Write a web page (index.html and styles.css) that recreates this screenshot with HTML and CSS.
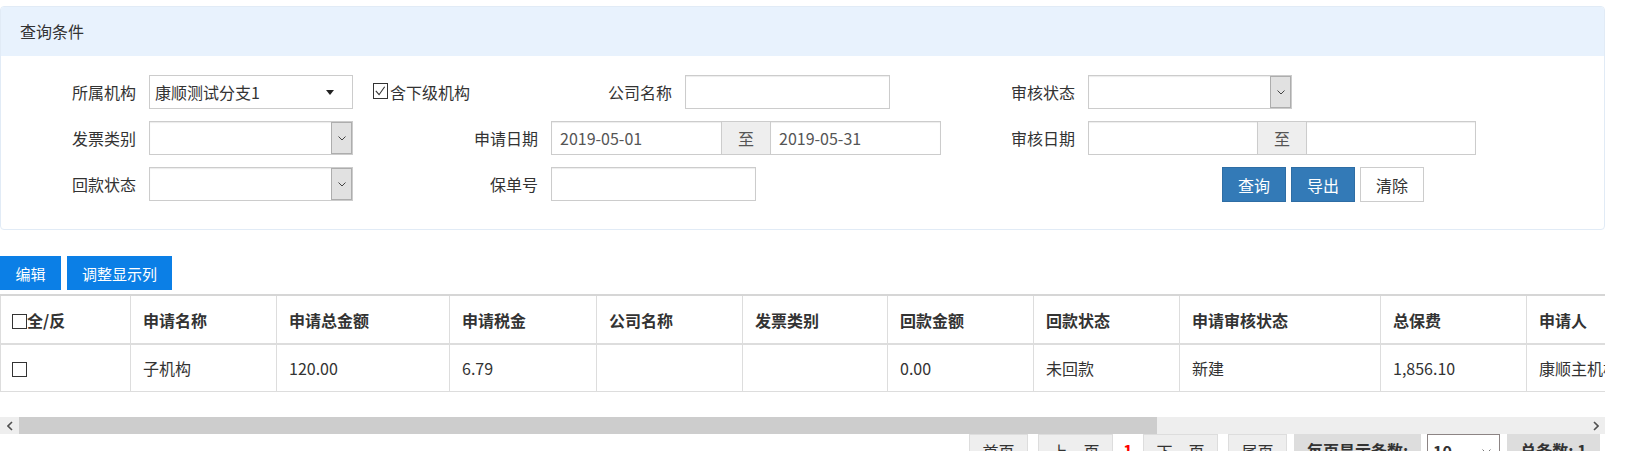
FILE: index.html
```html
<!DOCTYPE html>
<html lang="zh-CN">
<head>
    <meta charset="UTF-8">
    <title>发票申请查询</title>
    <link rel="stylesheet" href="styles.css">
</head>
<body>

<!-- 查询条件 -->
<div class="panel">
    <div class="panel-head">查询条件</div>
    <div class="panel-body">
        <div class="query-grid">
            <!-- 第一行 -->
            <label class="lbl">所属机构</label>
            <div class="org-select">
                <span>康顺测试分支1</span>
                <i class="caret"></i>
            </div>
            <div class="chk-cell">
                <span class="chk">
                    <svg width="15" height="15" viewBox="0 0 15 15"><polyline points="3,8 6.5,12 12.5,3.5" fill="none" stroke="#333" stroke-width="1.2"/></svg>
                </span>含下级机构
            </div>
            <label class="lbl">公司名称</label>
            <div class="cell"><input class="txt w205" type="text"></div>
            <label class="lbl">审核状态</label>
            <div class="cell">
                <div class="combo w204">
                    <span class="combo-val"></span>
                    <span class="combo-btn"><svg width="8" height="5" viewBox="0 0 8 5"><polyline points="0.5,0.5 4,4 7.5,0.5" fill="none" stroke="#444" stroke-width="1"/></svg></span>
                </div>
            </div>

            <!-- 第二行 -->
            <label class="lbl">发票类别</label>
            <div class="combo">
                <span class="combo-val"></span>
                <span class="combo-btn"><svg width="8" height="5" viewBox="0 0 8 5"><polyline points="0.5,0.5 4,4 7.5,0.5" fill="none" stroke="#444" stroke-width="1"/></svg></span>
            </div>
            <label class="lbl">申请日期</label>
            <div class="date-range span2">
                <input class="txt" type="text" value="2019-05-01">
                <span class="addon">至</span>
                <input class="txt" type="text" value="2019-05-31">
            </div>
            <label class="lbl">审核日期</label>
            <div class="date-range">
                <input class="txt" type="text">
                <span class="addon">至</span>
                <input class="txt" type="text">
            </div>

            <!-- 第三行 -->
            <label class="lbl">回款状态</label>
            <div class="combo">
                <span class="combo-val"></span>
                <span class="combo-btn"><svg width="8" height="5" viewBox="0 0 8 5"><polyline points="0.5,0.5 4,4 7.5,0.5" fill="none" stroke="#444" stroke-width="1"/></svg></span>
            </div>
            <label class="lbl">保单号</label>
            <div class="cell span2"><input class="txt w205" type="text"></div>
            <div class="cell"></div>
            <div class="btn-cell">
                <button class="btn btn-primary">查询</button>
                <button class="btn btn-primary">导出</button>
                <button class="btn btn-default">清除</button>
            </div>
        </div>
    </div>
</div>

<!-- 工具栏 -->
<div class="toolbar">
    <button class="tool-btn w61">编辑</button>
    <button class="tool-btn">调整显示列</button>
</div>

<!-- 列表 -->
<div class="grid-wrap">
    <table class="data-table">
        <colgroup>
            <col style="width:130px">
            <col style="width:146px">
            <col style="width:173px">
            <col style="width:147px">
            <col style="width:146px">
            <col style="width:145px">
            <col style="width:146px">
            <col style="width:146px">
            <col style="width:201px">
            <col style="width:146px">
            <col style="width:146px">
            <col style="width:146px">
            <col style="width:146px">
            <col style="width:146px">
        </colgroup>
        <thead>
        <tr>
            <th><span class="box"></span>全/反</th>
            <th>申请名称</th>
            <th>申请总金额</th>
            <th>申请税金</th>
            <th>公司名称</th>
            <th>发票类别</th>
            <th>回款金额</th>
            <th>回款状态</th>
            <th>申请审核状态</th>
            <th>总保费</th>
            <th>申请人</th>
            <th></th>
            <th></th>
            <th></th>
        </tr>
        </thead>
        <tbody>
        <tr>
            <td><span class="box"></span></td>
            <td>子机构</td>
            <td>120.00</td>
            <td>6.79</td>
            <td></td>
            <td></td>
            <td>0.00</td>
            <td>未回款</td>
            <td>新建</td>
            <td>1,856.10</td>
            <td>康顺主机构</td>
            <td></td>
            <td></td>
            <td></td>
        </tr>
        </tbody>
    </table>
</div>

<!-- 横向滚动条 -->
<div class="hscroll">
    <span class="hs-arrow"><svg width="6" height="10" viewBox="0 0 6 10"><polyline points="5,1 1,5 5,9" fill="none" stroke="#505050" stroke-width="1.6"/></svg></span>
    <div class="hs-track"><div class="hs-thumb"></div></div>
    <span class="hs-arrow"><svg width="6" height="10" viewBox="0 0 6 10"><polyline points="1,1 5,5 1,9" fill="none" stroke="#505050" stroke-width="1.6"/></svg></span>
</div>

<!-- 分页 -->
<div class="pager">
    <span class="pg-btn w59">首页</span>
    <span class="pg-btn w75 ml10">上一页</span>
    <span class="pg-cur">1</span>
    <span class="pg-btn w75">下一页</span>
    <span class="pg-btn w59 ml10">尾页</span>
    <span class="pg-info w127 ml7">每页显示条数:</span>
    <span class="pg-size">10
        <svg width="9" height="5" viewBox="0 0 9 5"><polyline points="0.5,0.5 4.5,4.5 8.5,0.5" fill="none" stroke="#777" stroke-width="1"/></svg>
    </span>
    <span class="pg-info w93 ml7">总条数: 1</span>
</div>

</body>
</html>
```

FILE: styles.css
```css
/* 页面基础 */
html, body {
    overflow: hidden;
}
body {
    margin: 6px 20px 0 0;
    font-family: "Microsoft YaHei", "Noto Sans CJK SC", sans-serif;
    font-size: 16px;
    color: #333;
    background: #fff;
}
input, button {
    font-family: inherit;
    font-size: 16px;
}

/* 查询面板 */
.panel {
    border: 1px solid #e1ebf6;
    border-radius: 4px;
}
.panel-head {
    height: 49px;
    line-height: 49px;
    padding-left: 19px;
    background: #e8f2fd;
    border-radius: 3px 3px 0 0;
}
.panel-body {
    padding: 19px 0 28px;
}
.query-grid {
    display: grid;
    grid-template-columns: 148px 204px 198px 134px 256px 147px 388px;
    grid-auto-rows: 34px;
    row-gap: 12px;
}
.lbl {
    display: flex;
    align-items: center;
    justify-content: flex-end;
    padding-right: 13px;
    line-height: 20px;
}
.cell {
    display: flex;
    align-items: center;
}
.span2 {
    grid-column: span 2;
}

/* 所属机构下拉 */
.org-select {
    box-sizing: border-box;
    display: flex;
    align-items: center;
    justify-content: space-between;
    border: 1px solid #ccc;
    padding: 0 18px 0 5px;
    line-height: 20px;
}
.caret {
    width: 0;
    height: 0;
    border-left: 4px solid transparent;
    border-right: 4px solid transparent;
    border-top: 5px solid #222;
}

/* 复选框 */
.chk-cell {
    display: flex;
    align-items: center;
    padding-left: 20px;
    line-height: 20px;
}
.chk {
    box-sizing: border-box;
    width: 15px;
    height: 16px;
    border: 1px solid #333;
    margin-right: 2px;
    margin-top: -2px;
    display: flex;
}
.chk svg {
    margin: -1px 0 0 -1px;
}

/* 普通下拉 */
.combo {
    box-sizing: border-box;
    display: flex;
    height: 34px;
    border: 1px solid #ccc;
    background: #fff;
    box-shadow: inset 0 1px 1px rgba(0, 0, 0, .08);
}
.combo-val {
    flex: 1;
}
.combo-btn {
    box-sizing: border-box;
    width: 21px;
    display: flex;
    align-items: center;
    justify-content: center;
    background: #e1e1e1;
    border: 1px solid #adadad;
}
.w204 {
    width: 204px;
}

/* 文本框 */
.txt {
    box-sizing: border-box;
    height: 34px;
    border: 1px solid #ccc;
    padding: 0 8px;
    color: #555;
    box-shadow: inset 0 1px 1px rgba(0, 0, 0, .075);
    outline: none;
}
.w205 {
    width: 205px;
}
.date-range {
    display: flex;
}
.date-range .txt {
    flex: 1;
    min-width: 0;
}
.addon {
    box-sizing: border-box;
    width: 48px;
    display: flex;
    align-items: center;
    justify-content: center;
    background: #eee;
    border-top: 1px solid #ccc;
    border-bottom: 1px solid #ccc;
    color: #555;
}

/* 查询按钮 */
.btn-cell {
    display: flex;
    gap: 5px;
    padding-left: 134px;
}
.btn {
    width: 64px;
    height: 35px;
    padding: 0;
    border: 1px solid #ccc;
    background: #fff;
    color: #333;
    cursor: pointer;
}
.btn-primary {
    background: #337ab7;
    border-color: #2e6da4;
    color: #fff;
}

/* 工具栏 */
.toolbar {
    display: flex;
    gap: 6px;
    margin-top: 26px;
}
.tool-btn {
    height: 34px;
    padding: 0 15px;
    border: none;
    background: #0b7fe6;
    color: #fff;
    font-size: 15px;
}
.tool-btn.w61 {
    width: 61px;
    padding: 0;
}

/* 列表 */
.grid-wrap {
    margin-top: 4px;
    overflow: hidden;
}
.data-table {
    table-layout: fixed;
    width: 2110px;
    border-collapse: collapse;
    border-top: 2px solid #d6d6d6;
}
.data-table th,
.data-table td {
    border: 1px solid #ddd;
    padding: 14px 11px 13px 12px;
    line-height: 20px;
    text-align: left;
    white-space: nowrap;
    overflow: hidden;
}
.data-table th {
    border-top: none;
    border-bottom: 2px solid #ddd;
    font-weight: bold;
}
.data-table td {
    padding-top: 13px;
}
.box {
    display: inline-block;
    box-sizing: border-box;
    width: 15px;
    height: 15px;
    border: 1px solid #333;
    vertical-align: -2px;
    margin-left: -1px;
}

/* 滚动条 */
.hscroll {
    display: flex;
    height: 17px;
    margin-top: 25px;
    background: #eee;
}
.hs-arrow {
    width: 19px;
    display: flex;
    align-items: center;
    justify-content: center;
}
.hs-track {
    flex: 1;
}
.hs-thumb {
    width: 72.6%;
    height: 100%;
    background: #cdcdcd;
}

/* 分页 */
.pager {
    display: flex;
    justify-content: flex-end;
    padding-right: 5px;
    line-height: 32px;
}
.pg-btn {
    box-sizing: border-box;
    height: 34px;
    border: 1px solid #ddd;
    background: #eee;
    text-align: center;
}
.pg-cur {
    width: 30px;
    text-align: center;
    color: #f00;
    font-weight: bold;
}
.pg-info {
    box-sizing: border-box;
    height: 34px;
    background: #ddd;
    font-weight: bold;
    text-align: center;
}
.pg-size {
    box-sizing: border-box;
    width: 73px;
    height: 34px;
    margin-left: 6px;
    padding: 0 8px 0 5px;
    border: 1px solid #8c8484;
    display: flex;
    align-items: center;
    justify-content: space-between;
    font-weight: bold;
}
.w59 { width: 59px; }
.w75 { width: 75px; }
.w93 { width: 93px; }
.w127 { width: 127px; }
.ml7 { margin-left: 7px; }
.ml10 { margin-left: 10px; }
```
